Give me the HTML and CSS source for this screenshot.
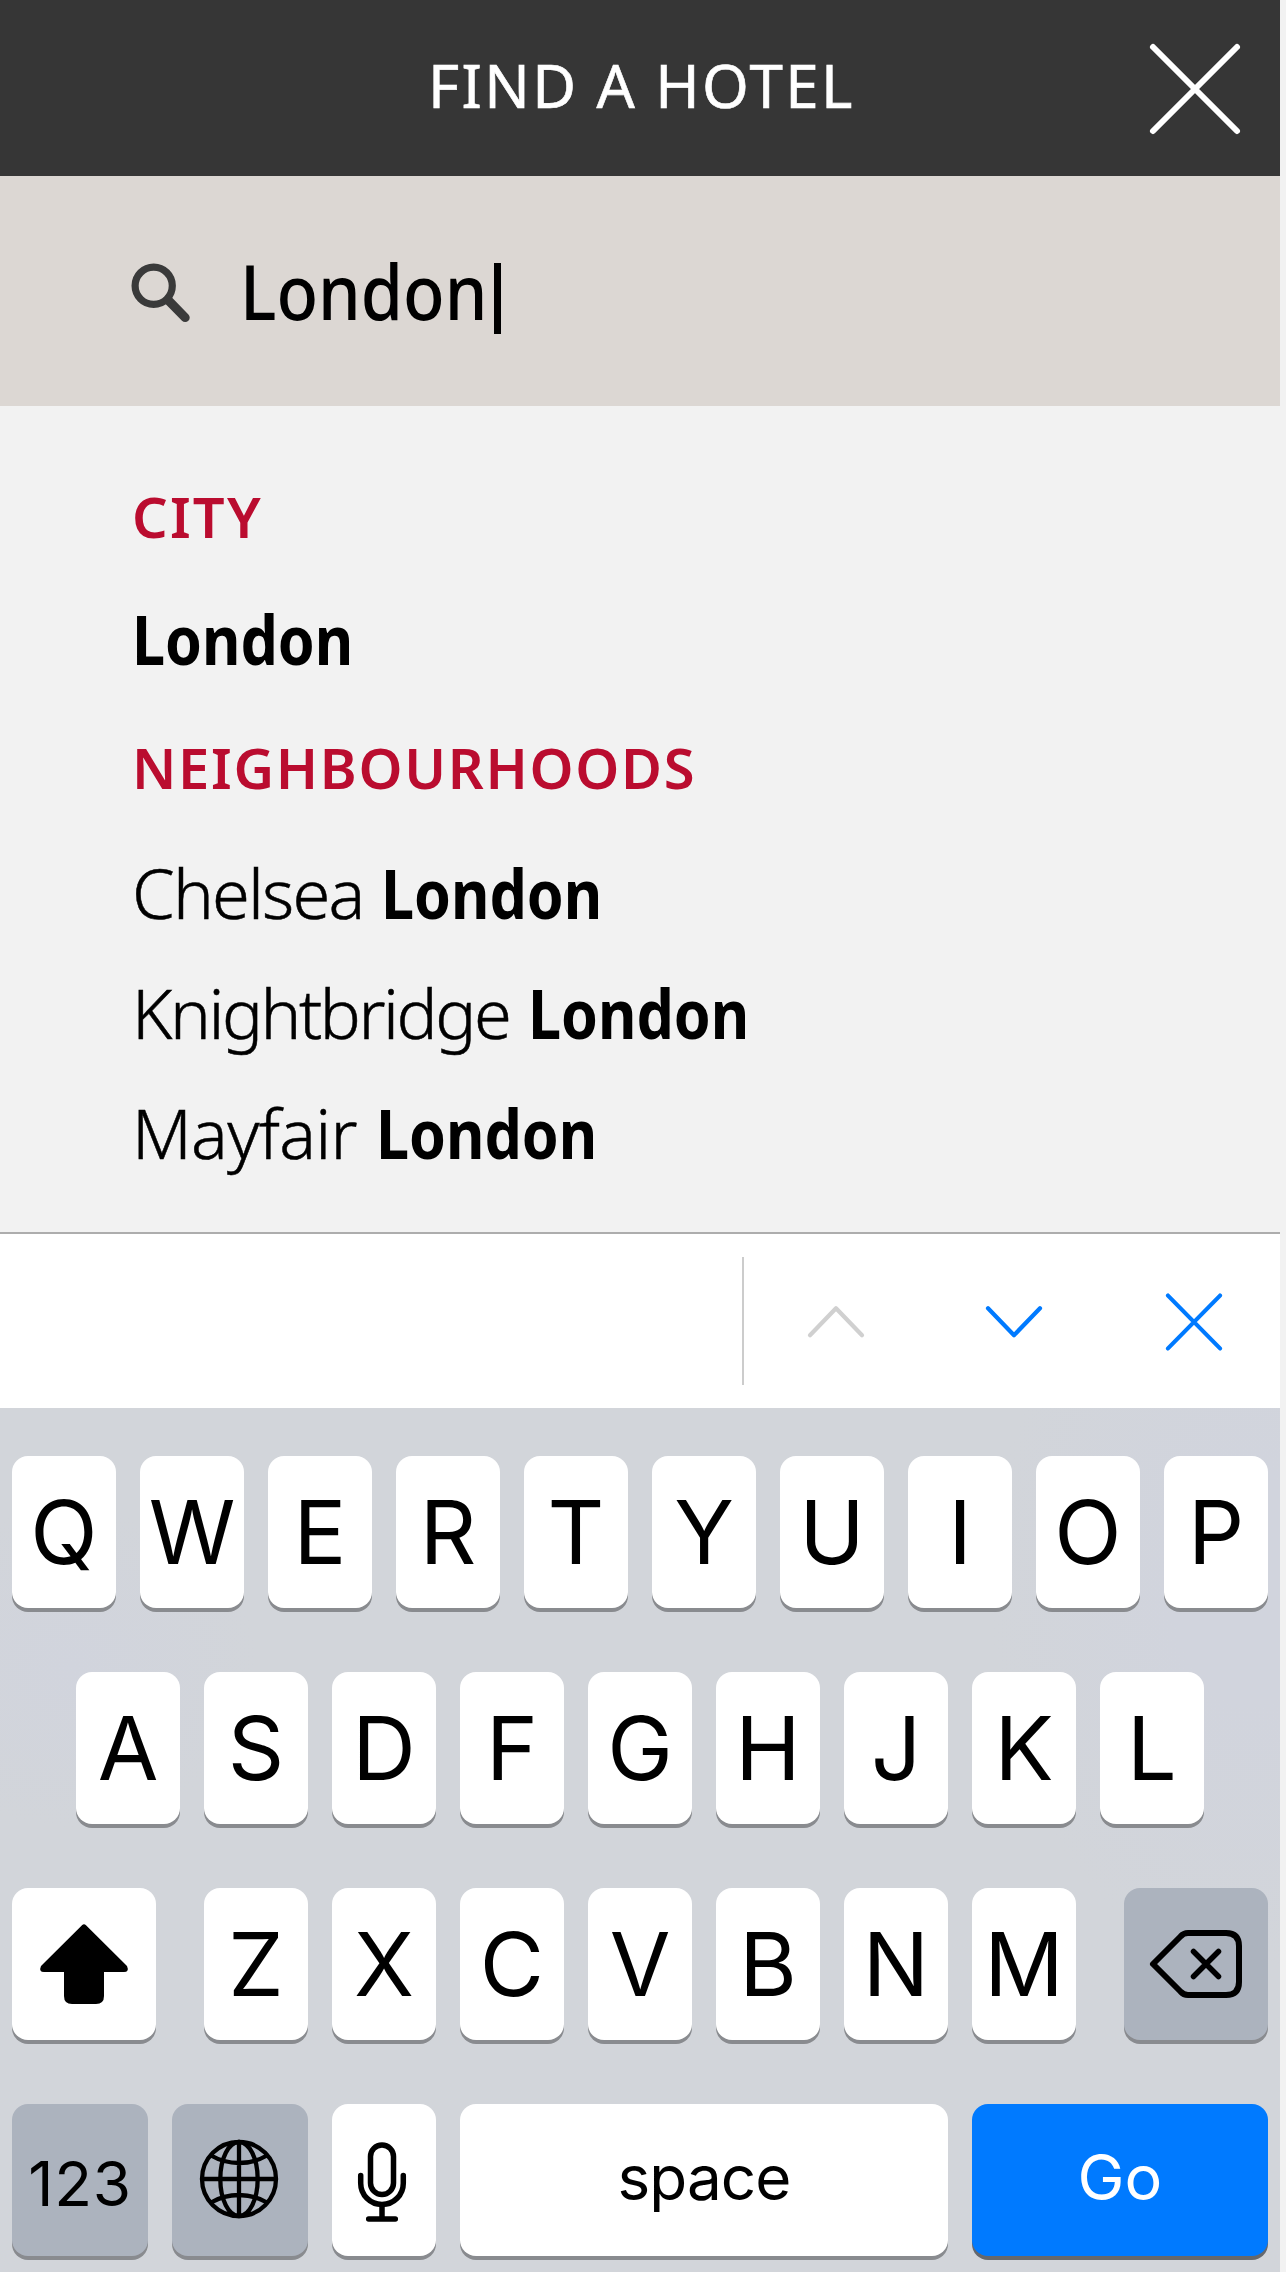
FILE: index.html
```html
<!DOCTYPE html>
<html lang="en">
<head>
<meta charset="utf-8">
<title>Find a hotel</title>
<link rel="stylesheet" href="styles.css">
</head>
<body>
<main class="screen">
  <header class="header">
    <h1 class="title">FIND A HOTEL</h1>
    <svg class="close" width="96" height="96" viewBox="0 0 96 96"><path d="M6 6 90 90M90 6 6 90"/></svg>
  </header>

  <div class="search">
    <svg class="glass" width="60" height="60" viewBox="0 0 60 60"><circle cx="22.7" cy="22.8" r="18.6" stroke-width="7.2"/><path d="M37 37 54.2 54.6" stroke-width="9"/></svg>
    <span class="query">London</span><span class="caret"></span>
  </div>

  <section class="results">
    <h2 class="group">CITY</h2>
    <div class="result city"><b>London</b></div>
    <h2 class="group hoods">NEIGHBOURHOODS</h2>
    <div class="result"><span class="chelsea">Chelsea </span><b>London</b></div>
    <div class="result"><span class="knight">Knightbridge </span><b>London</b></div>
    <div class="result"><span class="mayfair">Mayfair </span><b>London</b></div>
  </section>

  <nav class="toolbar">
    <i class="divider"></i>
    <svg class="off" width="60" height="60" viewBox="0 0 60 60"><path d="M4 44.2 30 17.2 56 44.2"/></svg>
    <svg width="60" height="60" viewBox="0 0 60 60"><path d="M4 17.2 30 44.2 56 17.2"/></svg>
    <svg class="dismiss" width="60" height="60" viewBox="0 0 60 60"><path d="M4 4.6 56 57.4M56 4.6 4 57.4"/></svg>
  </nav>

  <section class="keyboard">
    <div class="row"><span class="key">Q</span><span class="key">W</span><span class="key">E</span><span class="key">R</span><span class="key">T</span><span class="key">Y</span><span class="key">U</span><span class="key">I</span><span class="key">O</span><span class="key">P</span></div>
    <div class="row"><span class="key">A</span><span class="key">S</span><span class="key">D</span><span class="key">F</span><span class="key">G</span><span class="key">H</span><span class="key">J</span><span class="key">K</span><span class="key">L</span></div>
    <div class="row">
      <span class="key shift"><svg width="144" height="152" viewBox="0 0 144 152"><path d="M70 37.2Q72 35.2 74 37.2L115 78Q117.500 84 112 84H92V108Q92 116 84 116H60Q52 116 52 108V84H32Q26.500 84 29 78Z" fill="#000"/></svg></span>
      <span class="key">Z</span><span class="key">X</span><span class="key">C</span><span class="key">V</span><span class="key">B</span><span class="key">N</span><span class="key">M</span>
      <span class="key gray delete"><svg width="144" height="152" viewBox="0 0 144 152"><path d="M29 76 56.500 48.500Q59.500 45 64 45H102Q115 45 115 58V94Q115 107 102 107H64Q59.500 107 56.500 103.500Z" stroke-width="6"/><path d="M69.500 63.500 94.500 88.500M94.500 63.500 69.500 88.500" stroke-width="5.500"/></svg></span>
    </div>
    <div class="row">
      <span class="key gray wide num">123</span>
      <span class="key gray wide"><svg width="136" height="152" viewBox="0 0 136 152" stroke-width="4.300"><circle cx="67" cy="75" r="37"/><ellipse cx="67" cy="75" rx="18.700" ry="37"/><path d="M67 38V112M30 75H104M39 51.500Q52 59 67 59T95 51.500M39 98.500Q52 91 67 91T95 98.500"/></svg></span>
      <span class="key"><svg width="104" height="152" viewBox="0 0 104 152" stroke-width="5.500"><rect x="38.500" y="41" width="23" height="49.500" rx="11.500"/><path d="M28.700 71.500V79.200A21.300 21.300 0 0 0 71.300 79.200V71.500M50 101V115M36.700 115H63.300"/></svg></span>
      <span class="key space">space</span>
      <span class="key go">Go</span>
    </div>
  </section>
</main>
</body>
</html>
```
FILE: styles.css
```css
* { box-sizing: border-box; }
body {
  margin: 0;
  background: #f2f2f2;
  color: #000;
  font-family: "Noto Sans", sans-serif;
}
svg {
  display: block;
  flex: none;
  fill: none;
  stroke-linecap: round;
  stroke-linejoin: round;
}
.screen {
  display: flex;
  flex-direction: column;
  width: 1280px;
  height: 2272px;
  overflow: hidden;
}

.header {
  display: grid;
  grid-template-columns: 1fr auto;
  align-items: center;
  height: 176px;
  padding: 0 37px 0 428px;
  background: #363636;
}
.title {
  margin: 0 0 6px;
  color: #fff;
  font-size: 60px;
  font-weight: 400;
  letter-spacing: 2.400px;
  -webkit-text-stroke: .6px #fff;
}
.close { margin-top: 2px; stroke: #fff; stroke-width: 6px; }

.search {
  display: flex;
  align-items: center;
  height: 230px;
  padding-left: 131px;
  background: #dcd7d3;
}
.glass { margin-top: 3px; stroke: #3a3a3a; }
.query {
  width: 254px;
  margin: -1px 0 0 49px;
  font-size: 77px;
  font-weight: 500;
  transform: scaleX(.885);
  transform-origin: left;
}
.caret {
  width: 7px;
  height: 71px;
  margin-top: 15px;
  background: #000;
}

.results {
  display: flex;
  flex-direction: column;
  height: 826px;
  padding: 54px 0 0 132px;
}
.group {
  margin: 0 0 2px;
  color: #ba0c2f;
  font-size: 56px;
  line-height: 112px;
  font-weight: 600;
  letter-spacing: 2.2px;
}
.hoods { line-height: 128px; letter-spacing: 1.700px; }
.result {
  display: flex;
  font-size: 68.600px;
  line-height: 120px;
  font-weight: 300;
  white-space: pre;
}
.result span { -webkit-text-stroke: .5px #000; }
.result b {
  font-weight: 700;
  transform: scaleX(.862);
  transform-origin: left;
}
.city { line-height: 129px; }
.chelsea { margin-right: 2px; letter-spacing: -1.850px; }
.knight { margin-right: 3px; letter-spacing: -2.450px; }
.mayfair { margin-right: 2px; letter-spacing: -.700px; }

.toolbar {
  display: flex;
  align-items: center;
  gap: 118px;
  height: 176px;
  padding-left: 742px;
  border-top: 2px solid #adadad;
  background: #fff;
  stroke: #007aff;
  stroke-width: 4.200px;
}
.divider {
  width: 2px;
  height: 128px;
  margin-right: -56px;
  background: #ccc;
}
.off { stroke: #d0d0d0; }
.dismiss { margin-left: 2px; }

.keyboard {
  display: flex;
  flex-direction: column;
  flex: 1;
  gap: 64px;
  padding-top: 48px;
  background:
    radial-gradient(ellipse 190px 160px at 70px 260px, #d1d4dd, transparent),
    radial-gradient(ellipse 260px 380px at 1250px 180px, #d1d4dd 30%, transparent),
    #d2d5da;
  font-family: Inter, sans-serif;
}
.row {
  display: flex;
  justify-content: center;
  gap: 24px;
}
.key {
  display: flex;
  align-items: center;
  justify-content: center;
  width: 104px;
  height: 152px;
  border-radius: 16px;
  background: #fff;
  box-shadow: 0 4px 0 #898b8f;
  font-size: 88px;
  line-height: 1;
  stroke: #000;
}
.gray { background: #acb3be; }
.shift, .delete { width: 144px; }
.shift { margin-right: 24px; stroke: none; }
.delete { margin-left: 24px; }
.wide { width: 136px; }
.num, .space, .go {
  font-size: 62px;
  stroke: none;
}
.num { padding-top: 7px; letter-spacing: .800px; }
.space { width: 488px; padding-bottom: 5px; letter-spacing: -.900px; }
.go {
  width: 296px;
  padding-bottom: 5px;
  background: #007aff;
  box-shadow: 0 4px 0 #65686d;
  color: #fff;
  font-size: 63px;
  font-weight: 400;
}
```
